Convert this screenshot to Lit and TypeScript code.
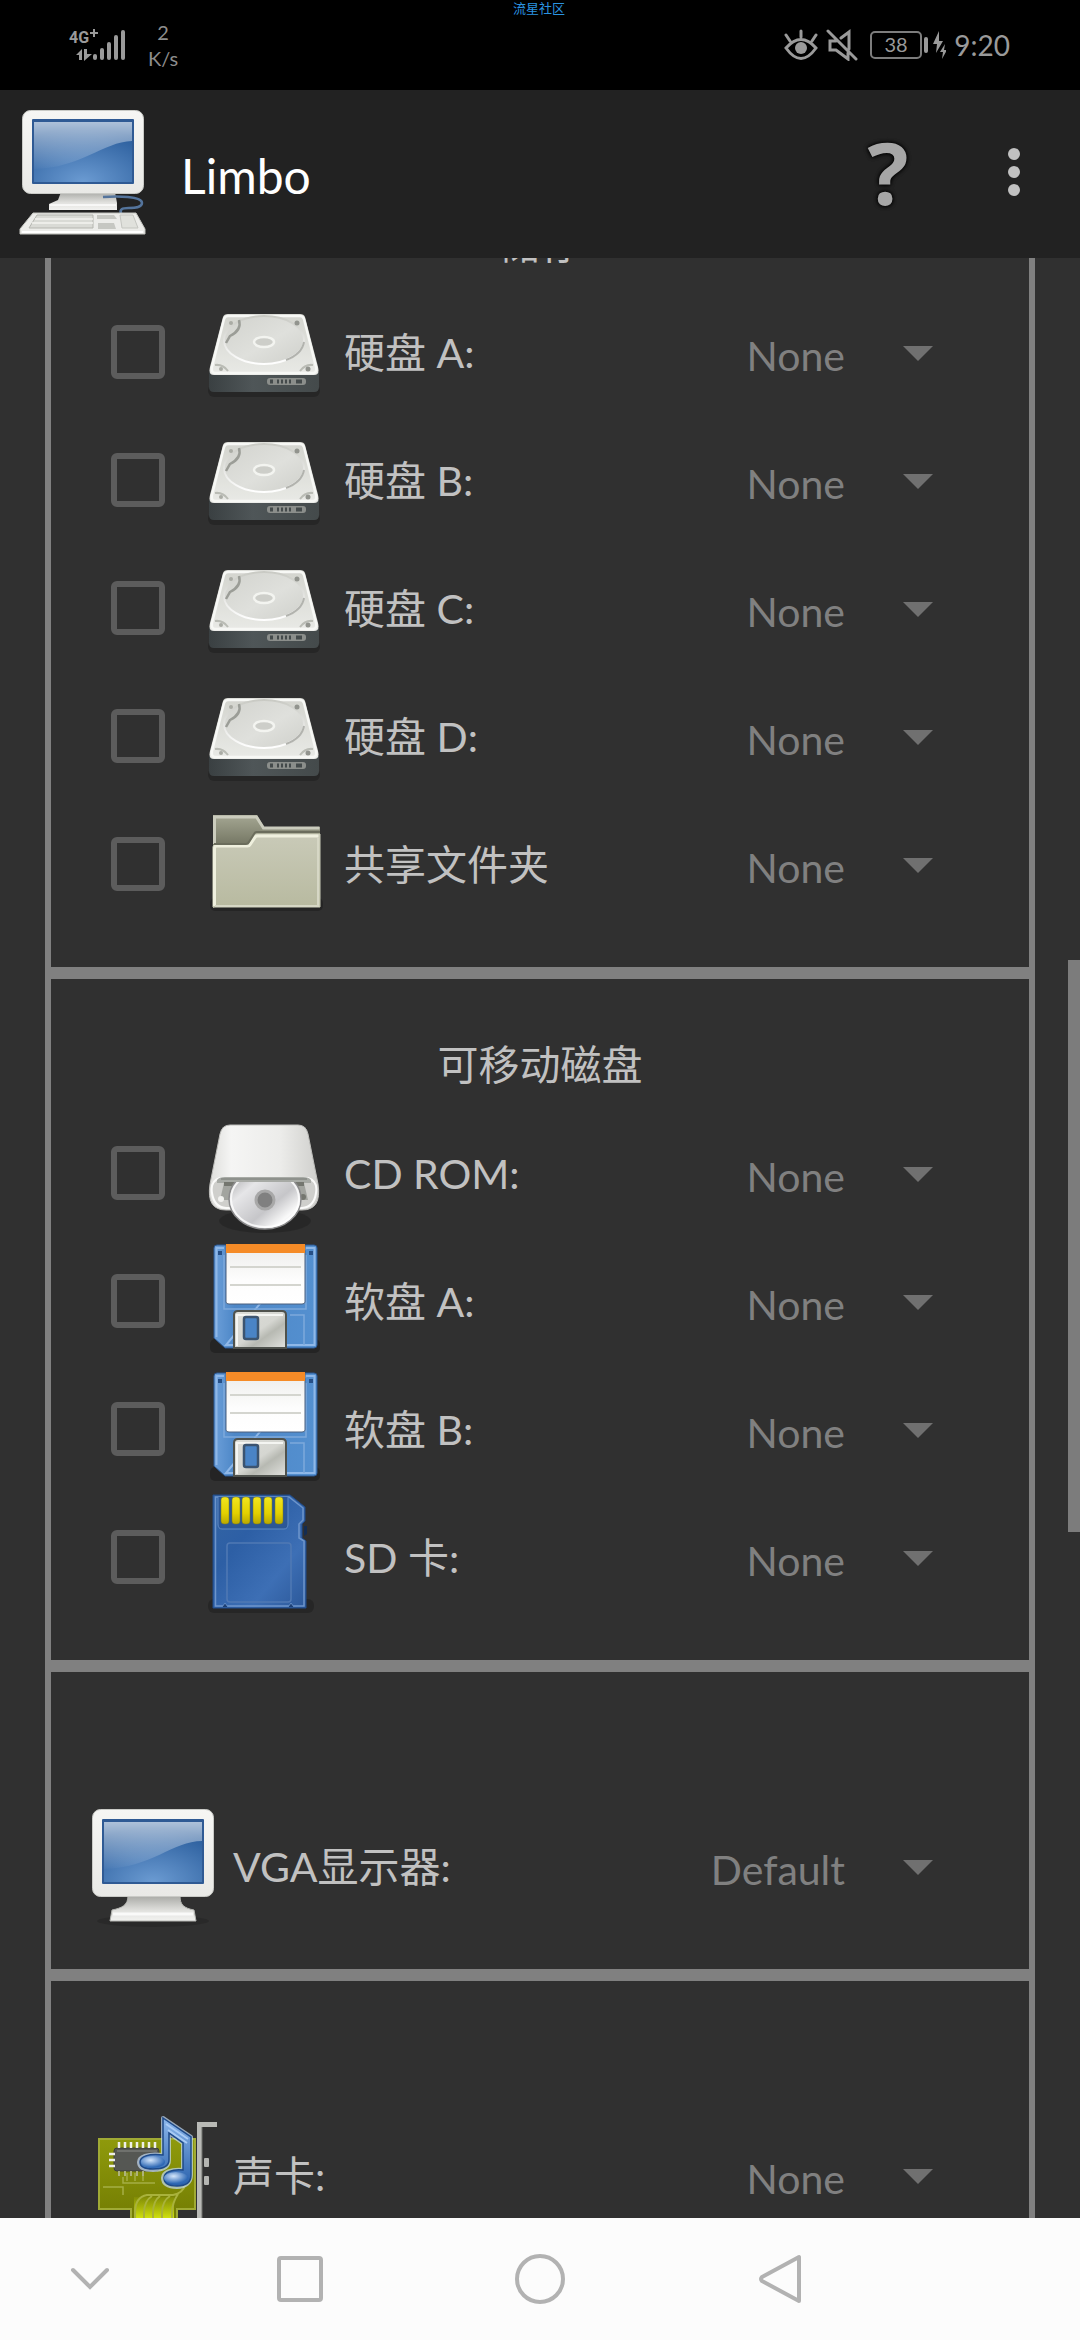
import { LitElement, html, svg, css, nothing } from "lit";
import { customElement, property } from "lit/decorators.js";

type IconName = "computer" | "disk" | "folder" | "cdrom" | "floppy" | "sdcard" | "monitor" | "sound";

interface Device {
  id: string;
  label: string;
  icon: IconName;
  value: string;
  checkable: boolean;
}

interface Section {
  title: string;
  devices: Device[];
}

const drive = (id: string, label: string, icon: IconName): Device => ({
  id,
  label,
  icon,
  value: "None",
  checkable: true,
});

const SECTIONS: Section[] = [
  {
    title: "储存",
    devices: [
      drive("hda", "硬盘 A:", "disk"),
      drive("hdb", "硬盘 B:", "disk"),
      drive("hdc", "硬盘 C:", "disk"),
      drive("hdd", "硬盘 D:", "disk"),
      drive("shared", "共享文件夹", "folder"),
    ],
  },
  {
    title: "可移动磁盘",
    devices: [
      drive("cdrom", "CD ROM:", "cdrom"),
      drive("fda", "软盘 A:", "floppy"),
      drive("fdb", "软盘 B:", "floppy"),
      drive("sd", "SD 卡:", "sdcard"),
    ],
  },
  {
    title: "",
    devices: [{ id: "vga", label: "VGA显示器:", icon: "monitor", value: "Default", checkable: false }],
  },
  {
    title: "",
    devices: [{ id: "sound", label: "声卡:", icon: "sound", value: "None", checkable: false }],
  },
];

const screenDefs = svg`
  <linearGradient id="case" x1="0" y1="0" x2="0" y2="1">
    <stop offset="0" stop-color="#f6f6f4" /><stop offset="1" stop-color="#e9e9e6" />
  </linearGradient>
  <radialGradient id="glass" cx="0.5" cy="1" r="0.9">
    <stop offset="0" stop-color="#6b9bd2" /><stop offset="1" stop-color="#2a5d9c" />
  </radialGradient>
  <linearGradient id="gloss" x1="0" y1="0" x2="0" y2="1">
    <stop offset="0" stop-color="#fff" stop-opacity="0.62" /><stop offset="1" stop-color="#fff" stop-opacity="0.02" />
  </linearGradient>
  <linearGradient id="stand" x1="0" y1="0" x2="0" y2="1">
    <stop offset="0" stop-color="#a9aaa6" /><stop offset="0.6" stop-color="#e2e2df" /><stop offset="1" stop-color="#f2f2f0" />
  </linearGradient>`;

const ICONS: Record<IconName, unknown> = {
  computer: svg`
    <defs>${screenDefs}</defs>
    <path d="M42 84h54l2 11v7H30v-6l9-4z" fill="url(#stand)" />
    <path d="M31 97h66" stroke="#fff" stroke-width="2" opacity="0.7" />
    <rect x="3.5" y="2.500" width="121" height="83" rx="8" fill="url(#case)" stroke="#c9cac6" />
    <rect x="13" y="11" width="102" height="65" rx="1" fill="#2f5a94" />
    <rect x="15" y="14" width="98" height="60" fill="url(#glass)" />
    <path d="M15 14h98v19C84 34 62 60 15 61z" fill="url(#gloss)" />
    <path d="M84 89c14-1 39-1 39 6s-17 4-20 6-1 5 1 8" fill="none" stroke="#54749c" stroke-width="2.500" />
    <path d="M14 105h103l9 16v5H1v-5z" fill="#ecece9" stroke="#c4c5c0" />
    <path d="M18 107h56v13H10z" fill="#d9dad5" stroke="#b4b5af" />
    <path d="M16 111h58M13 115h61" stroke="#f3f3f0" stroke-width="1.500" />
    <path d="M78 107h17l3 4H78zM79 115h16l2 6H79z" fill="#c6c7c2" />
    <path d="M101 107h13l5 13h-16z" fill="#e0e1dc" stroke="#c4c5c0" />
    <path d="M3 124h121" stroke="#fff" stroke-width="2" />`,
  monitor: svg`
    <defs>${screenDefs}</defs>
    <ellipse cx="64" cy="119" rx="56" ry="6" fill="#000" opacity="0.14" />
    <path d="M39 94h52c0 9 4 12 14 14l2 11H21l2-11c10-2 16-5 16-14z" fill="url(#stand)" stroke="#b5b6b2" />
    <path d="M24 112h80" stroke="#fff" stroke-width="3" opacity="0.8" />
    <rect x="3.500" y="7.500" width="121" height="87" rx="8" fill="url(#case)" stroke="#c9cac6" />
    <rect x="13" y="17" width="102" height="65" rx="1" fill="#2f5a94" />
    <rect x="15" y="20" width="98" height="60" fill="url(#glass)" />
    <path d="M15 20h98v19C84 39 62 66 15 67z" fill="url(#gloss)" />`,
  disk: svg`
    <defs>
      <linearGradient id="top" x1="0" y1="0" x2="0" y2="1">
        <stop offset="0" stop-color="#d3d4ce" /><stop offset="1" stop-color="#e9eae6" />
      </linearGradient>
      <linearGradient id="plate" x1="0" y1="0" x2="1" y2="1">
        <stop offset="0" stop-color="#d2d3ce" /><stop offset="0.55" stop-color="#dfe0dc" /><stop offset="1" stop-color="#cfd0cb" />
      </linearGradient>
      <linearGradient id="side" x1="0" y1="0" x2="1" y2="0">
        <stop offset="0" stop-color="#3a4042" /><stop offset="0.4" stop-color="#4f5658" /><stop offset="1" stop-color="#444a4b" />
      </linearGradient>
      <linearGradient id="rim" x1="0" y1="0" x2="0" y2="1">
        <stop offset="0" stop-color="#c9cac4" /><stop offset="1" stop-color="#fff" />
      </linearGradient>
    </defs>
    <rect x="8" y="96" width="112" height="13" rx="6" fill="#000" opacity="0.2" />
    <path d="M9 84h110v15q0 5-5 5H14q-5 0-5-5z" fill="url(#side)" />
    <path d="M28 26h72q4 0 5 3l13 50q2 8-4 8H14q-6 0-4-8l13-50q1-3 5-3z" fill="url(#top)" />
    <path d="M28 28h72q3 0 4 3l12 48q1 6-3 6H15q-4 0-3-6l12-48q1-3 4-3z" fill="none" stroke="#f7f8f5" stroke-width="2.500" />
    <ellipse cx="64" cy="52" rx="40" ry="24" fill="url(#plate)" stroke="url(#rim)" stroke-width="2" />
    <path d="M39 32q3 10-9 16l-4 7" fill="none" stroke="#9b9d97" stroke-width="2.500" />
    <path d="M104 54q-2 12-18 18" fill="none" stroke="#b2b3ae" stroke-width="2" />
    <ellipse cx="64" cy="54" rx="10" ry="5" fill="#cdcec9" stroke="#f3f4f0" stroke-width="2.500" />
    <path d="M15 77q8-1 13 6M113 77q-8-1-13 6" fill="none" stroke="#babcb5" stroke-width="2" />
    <circle cx="31" cy="35" r="2" fill="#aaaca5" /><circle cx="97" cy="35" r="2.500" fill="#92948e" />
    <circle cx="21" cy="81" r="2" fill="#aaaca5" /><circle cx="108" cy="81" r="2.500" fill="#92948e" />
    <rect x="67" y="90" width="39" height="7" rx="3" fill="#8b8e8b" />
    <path d="M70 93.500h3M77 93.500h2M81 93.500h2M85 93.500h2M89 93.500h2M96 93.500h6" stroke="#444a4b" stroke-width="4" />`,
  folder: svg`
    <defs>
      <linearGradient id="back" x1="0" y1="0" x2="0" y2="1">
        <stop offset="0" stop-color="#a5a793" /><stop offset="0.35" stop-color="#70725f" /><stop offset="1" stop-color="#a5a793" />
      </linearGradient>
      <linearGradient id="front" x1="0" y1="0" x2="0" y2="1">
        <stop offset="0" stop-color="#c9cab8" /><stop offset="1" stop-color="#b8baa0" />
      </linearGradient>
    </defs>
    <rect x="10" y="98" width="113" height="13" rx="5" fill="#000" opacity="0.22" />
    <path d="M13 108V15h44l7 12h56v20z" fill="url(#back)" />
    <path d="M14.500 44V17h42l7 11h56" fill="none" stroke="#cbccbd" stroke-width="3" />
    <path d="M13 107V47q0-2 2-2h31q2 0 3-2l4-7q1-2 3-2h64v73z" fill="url(#front)" stroke="#ced0bb" />
    <path d="M14.500 106V49q0-3 2-3h31q2 0 3-2l4-6q1-2 3-2h61" fill="none" stroke="#eff0de" stroke-width="3" />
    <path d="M15 106h103V38" fill="none" stroke="#d6d7c5" stroke-width="2" />
    <path d="M14 44h32q2 0 3-2l5-8q1-2 3-2h63" fill="none" stroke="#6b6d5c" stroke-width="2" />`,
  cdrom: svg`
    <defs>
      <linearGradient id="shell" x1="0" y1="0" x2="1" y2="0">
        <stop offset="0" stop-color="#dededb" /><stop offset="0.2" stop-color="#f5f5f4" />
        <stop offset="0.65" stop-color="#ececea" /><stop offset="1" stop-color="#cfcfcc" />
      </linearGradient>
      <linearGradient id="disc" x1="0" y1="0" x2="1" y2="1">
        <stop offset="0" stop-color="#9a9a9c" /><stop offset="0.3" stop-color="#e6e6e8" />
        <stop offset="0.6" stop-color="#c6c6c9" /><stop offset="0.8" stop-color="#fafafa" /><stop offset="1" stop-color="#d2d2d4" />
      </linearGradient>
      <clipPath id="slot"><rect x="20" y="73" width="90" height="50" /></clipPath>
    </defs>
    <ellipse cx="65" cy="112" rx="46" ry="12" fill="#000" opacity="0.18" />
    <path d="M30 16h68q8 0 10 9l10 50q4 26-16 26H26Q6 101 10 75l10-50q2-9 10-9z" fill="url(#shell)" stroke="#bdbdba" />
    <path d="M20 69h88q10 3 8 15-2 14-14 15H26q-12-1-14-15-2-12 8-15z" fill="#cfcfcc" stroke="#fbfbfa" stroke-width="2" />
    <path d="M17 71q2-3 8-3h78q6 0 8 3v3H17z" fill="#a7aaa5" />
    <path d="M24 74h80l4 17H20z" fill="#a2a49f" />
    <path d="M24 75h80" stroke="#74766f" stroke-width="4" />
    <path d="M21 70h86" stroke="#8e918c" stroke-width="2" />
    <circle cx="21" cy="90" r="3" fill="#f3f3f1" /><circle cx="103" cy="88" r="3" fill="#74766f" />
    <g clip-path="url(#slot)">
      <ellipse cx="65" cy="90" rx="36" ry="30" fill="url(#disc)" stroke="#8a8a8b" stroke-width="1.500" />
      <ellipse cx="65" cy="90" rx="34" ry="28" fill="none" stroke="#fff" stroke-width="2" opacity="0.8" />
    </g>
    <circle cx="65" cy="91" r="9" fill="#808080" stroke="#a8a8a8" stroke-width="3" />`,
  floppy: svg`
    <defs>
      <linearGradient id="body" x1="0" y1="0" x2="1" y2="0">
        <stop offset="0" stop-color="#6c9fd9" /><stop offset="0.2" stop-color="#4d87c7" /><stop offset="1" stop-color="#5490d0" />
      </linearGradient>
      <linearGradient id="paper" x1="0" y1="0" x2="0" y2="1">
        <stop offset="0" stop-color="#ececea" /><stop offset="0.6" stop-color="#fdfdfd" /><stop offset="1" stop-color="#fff" />
      </linearGradient>
      <linearGradient id="metal" x1="0" y1="0" x2="1" y2="1">
        <stop offset="0" stop-color="#dcddd8" /><stop offset="0.5" stop-color="#d5d6d1" />
        <stop offset="0.65" stop-color="#b7b9b2" /><stop offset="1" stop-color="#e2e3df" />
      </linearGradient>
    </defs>
    <rect x="10" y="102" width="110" height="14" rx="5" fill="#000" opacity="0.25" />
    <path d="M17 8h97q3 0 3 3v97q0 3-3 3H25l-11-10V11q0-3 3-3z" fill="url(#body)" stroke="#2a5690" />
    <path d="M16.500 100V11H24M106 11h8.500v97H26z" fill="none" stroke="#8fb8e8" stroke-width="2" />
    <path d="M24 18v54h82V18M90 78h14v30" fill="none" stroke="#7da9dc" stroke-width="1.500" />
    <path d="M18 14h4v4h-4zM109 14h4v4h-4z" fill="#264f86" />
    <path d="M26 8h79v57q0 2-3 2H29q-3 0-3-2z" fill="url(#paper)" stroke="#4a5f7c" />
    <rect x="26" y="7" width="79" height="9" fill="#f58b27" />
    <path d="M30 30h71M30 48h71" stroke="#d4d5cf" stroke-width="2" />
    <path d="M34 111V78q0-4 4-4h44q4 0 4 4v33z" fill="url(#metal)" stroke="#4f524d" stroke-width="2" />
    <path d="M37 109V78h46" fill="none" stroke="#f4f5f2" stroke-width="2" />
    <rect x="44" y="80" width="14" height="22" rx="2" fill="#4a84c6" stroke="#3c5470" stroke-width="2.500" />`,
  sdcard: svg`
    <defs>
      <linearGradient id="card" x1="0" y1="0" x2="1" y2="1">
        <stop offset="0" stop-color="#3465a4" /><stop offset="0.35" stop-color="#2d5fa5" />
        <stop offset="0.7" stop-color="#3d6fb5" /><stop offset="1" stop-color="#2c5899" />
      </linearGradient>
      <linearGradient id="gold" x1="0" y1="0" x2="0" y2="1">
        <stop offset="0" stop-color="#f2e61e" /><stop offset="0.6" stop-color="#e3d000" /><stop offset="1" stop-color="#b9a800" />
      </linearGradient>
    </defs>
    <rect x="8" y="106" width="106" height="14" rx="6" fill="#000" opacity="0.2" />
    <path d="M13 2h77l15 12v14l-3 3v14l4 3v67H13z" fill="url(#card)" stroke="#204a87" />
    <path d="M15.500 113V4H89l14 11v12l-4 4v14l5 3v65H16z" fill="none" stroke="#6d95cb" stroke-width="1.500" />
    <path d="M18 4v27q0 5 4 5h62q4 0 4-5V4" fill="#2c5796" stroke="#5f8ac4" />
    ${[21, 32, 42, 53, 64, 75].map(
      (x) => svg`<rect x=${x} y="4" width="8" height="27" rx="3" fill="url(#gold)" stroke="#7a7b1c" stroke-width="0.500" />`,
    )}
    <rect x="27" y="50" width="64" height="59" rx="3" fill="none" stroke="#5079b4" stroke-width="1.500" />
    <path d="M22 114l3-4 3 4M88 114l3-4 3 4" fill="#1c3f74" stroke="#5f8ac4" />
    <path d="M104 33h3v8l-3 2z" fill="#142c50" />`,
  sound: svg`
    <defs>
      <linearGradient id="board" x1="0" y1="0" x2="0" y2="1">
        <stop offset="0" stop-color="#8f9a0c" /><stop offset="1" stop-color="#6c7500" />
      </linearGradient>
      <linearGradient id="tone" x1="0" y1="0" x2="0" y2="1">
        <stop offset="0" stop-color="#8db8ec" /><stop offset="1" stop-color="#2860ab" />
      </linearGradient>
      <radialGradient id="head" cx="0.4" cy="0.35" r="0.6">
        <stop offset="0" stop-color="#d4e6fb" /><stop offset="1" stop-color="#2f69b5" />
      </radialGradient>
      <linearGradient id="glow" gradientUnits="userSpaceOnUse" x1="0" y1="84" x2="0" y2="108">
        <stop offset="0" stop-color="#d9ea10" stop-opacity="0" /><stop offset="1" stop-color="#d9ea10" stop-opacity="0.95" />
      </linearGradient>
    </defs>
    <path d="M10 28h96v70H88v30H42V98H10z" fill="url(#board)" stroke="#a0aa35" stroke-width="2" />
    <path d="M14 76h20v8M34 66v6h32M38 62v8M46 62v8M54 62v8" fill="none" stroke="#a5ae45" stroke-width="1.500" />
    <rect x="45" y="86" width="40" height="42" fill="url(#glow)" />
    <path d="M46 128V102q0-16 12-18h26q10-2 12-10M55 128V102q0-12 8-17M64 128V102q0-12 7-17M73 128V102q0-12 8-17M83 128V102q0-10 6-19" fill="none" stroke="#a9b23c" stroke-width="2" />
    <rect x="25" y="37" width="45" height="23" rx="3" fill="#555753" stroke="#3c3e3a" />
    <path d="M28 40h40" stroke="#6f716d" stroke-width="2" />
    <path d="M30 31v6M36 31v6M42 31v6M48 31v6M54 31v6M60 31v6M66 31v6M20 43h6M20 49h6M20 55h6" stroke="#eeefe8" stroke-width="2.500" />
    <path d="M30 60v5M36 60v5M42 60v5M48 60v5M54 60v5" stroke="#aeb37a" stroke-width="2" />
    <path d="M92 40h10v12M94 62h8" fill="none" stroke="#a5ae45" stroke-width="1.500" />
    <path d="M74 7l28 19v38c0 8-6 12-14 12-10 0-14-4-14-9 0-6 8-9 20-8V32L80 22v27c0 7-6 10-16 10-9 0-14-3-14-8s8-9 24-7z" fill="url(#tone)" stroke="#c5dbf3" stroke-width="4" stroke-linejoin="round" opacity="0.7" />
    <path d="M74 7l28 19v38c0 8-6 11-14 11-10 0-13-4-13-8 0-6 8-9 19-8V32L80 22v27c0 7-6 9-16 9-9 0-13-3-13-7 0-5 8-9 23-7z" fill="url(#tone)" stroke="#1e4a89" stroke-width="1.500" />
    <path d="M77 13l22 15M79 19l19 13" stroke="#a9cbf5" stroke-width="2" />
    <ellipse cx="64" cy="51" rx="12" ry="6" fill="url(#head)" /><ellipse cx="87" cy="67" rx="12" ry="6" fill="url(#head)" />
    <path d="M110.500 128V13.500H128" fill="none" stroke="#b9bab6" stroke-width="5" />
    <path d="M113 128V16" stroke="#6e706c" />
    <rect x="115" y="47" width="5" height="9" rx="1" fill="#b5b6b2" /><rect x="115" y="65" width="5" height="9" rx="1" fill="#b5b6b2" />`,
};

/** Picture of a device, drawn on a 128-unit grid. */
@customElement("device-icon")
export class DeviceIcon extends LitElement {
  static styles = css`
    :host {
      display: block;
      flex: none;
      width: 128px;
      height: 128px;
    }
    .picture {
      display: block;
      width: 100%;
      height: 100%;
    }
  `;

  @property() name: IconName = "disk";

  render() {
    return html`<svg class="picture" viewBox="0 0 128 128" aria-hidden="true">${ICONS[this.name]}</svg>`;
  }
}

@customElement("app-root")
export class AppRoot extends LitElement {
  static styles = css`
    :host {
      display: flex;
      flex-direction: column;
      height: 100vh;
      overflow: hidden;
      background: #303030;
      color: #c1c1c1;
      font-family: Lato, "Noto Sans CJK SC", sans-serif;
    }
    button {
      display: grid;
      place-items: center;
      margin: 0;
      padding: 0;
      border: 0;
      background: none;
      color: inherit;
      font: inherit;
    }
    .glyph {
      display: block;
    }

    .status {
      display: grid;
      grid-template-columns: 1fr auto 1fr;
      flex: none;
      height: 90px;
      box-sizing: border-box;
      padding: 0 70px 0 68px;
      background: #000;
      color: #9a9a9a;
    }
    .carrier,
    .indicators {
      display: flex;
      align-items: center;
    }
    .carrier {
      gap: 20px;
    }
    .rate {
      display: flex;
      flex-direction: column;
      align-items: center;
      font-size: 20px;
      line-height: 26px;
      color: #8d8d8d;
    }
    .watermark {
      font-size: 13px;
      line-height: 16px;
      color: #2b94e0;
    }
    .indicators {
      justify-content: flex-end;
      gap: 8px;
    }
    .clock {
      font-size: 28px;
      line-height: 32px;
    }
    .network {
      font: 700 16px "Roboto", sans-serif;
    }
    .charge {
      font-size: 20px;
    }

    .appbar {
      display: flex;
      align-items: center;
      flex: none;
      height: 168px;
      box-sizing: border-box;
      padding: 0 24px 4px 19px;
      background: #222;
    }
    .name {
      flex: 1;
      margin: 0;
      padding: 8px 0 0 34px;
      font-size: 48px;
      line-height: 60px;
      font-weight: 400;
      color: #fff;
    }
    .help {
      width: 120px;
      height: 120px;
      font: 700 86px/100px "Open Sans", sans-serif;
      color: #a6a6a6;
      text-shadow: 0 0 4px #000, 0 0 4px #000;
    }
    .more {
      width: 84px;
      height: 120px;
      margin-left: 24px;
    }

    .content {
      position: relative;
      flex: 1;
      min-height: 0;
      overflow: hidden;
      padding: 0 45px;
    }
    .sections {
      margin-top: -106px;
    }
    .thumb {
      position: absolute;
      top: 702px;
      right: 0;
      width: 12px;
      height: 572px;
      background: #7c7c7c;
    }
    .section {
      box-sizing: border-box;
      border: 6px solid #808080;
      padding: 0 0 39px;
    }
    .title {
      height: 48px;
      margin: 0;
      padding: 62px 0 20px;
      font-size: 41px;
      line-height: 48px;
      font-weight: 400;
      text-align: center;
    }
    .device {
      display: flex;
      align-items: center;
      height: 128px;
      padding-left: 38px;
    }
    .device.checkable {
      padding-left: 60px;
    }
    .tick {
      appearance: none;
      flex: none;
      box-sizing: border-box;
      width: 54px;
      height: 54px;
      margin: 0 35px 0 0;
      border: 6px solid #5c5c5c;
      border-radius: 6px;
    }
    .tick:checked {
      background: #808080;
    }
    .label {
      flex: 1;
      padding: 2px 0 0 16px;
      font-size: 41px;
      line-height: 48px;
      white-space: nowrap;
    }
    .picker {
      display: grid;
      align-items: center;
      width: 400px;
      padding-top: 4px;
    }
    .choice {
      grid-area: 1 / 1;
      appearance: none;
      width: 100%;
      height: 96px;
      margin: 0;
      padding: 4px 184px 0 0;
      border: 0;
      background: none;
      color: #808080;
      font: 400 41px/48px Lato, "Noto Sans CJK SC", sans-serif;
      text-align: right;
      text-align-last: right;
    }
    .arrow {
      grid-area: 1 / 1;
      justify-self: end;
      margin-right: 96px;
      pointer-events: none;
    }

    .nav {
      display: grid;
      grid-template-columns: 3fr 4fr 4fr 4fr 3fr;
      flex: none;
      height: 122px;
      background: #fcfcfc;
    }
  `;

  private renderStatus() {
    return html`
      <div class="status">
        <div class="carrier">
          <svg class="glyph" width="60" height="40" viewBox="0 0 60 40" fill="#9a9a9a" role="img" aria-label="4G+">
            <text class="network" x="1" y="18">4G</text>
            <path d="M25 4h2v3h3v2h-3v3h-2V9h-3V7h3z" />
            <path d="M8 30l6-6v11h-3v-5zM16 24h3v5h5l-8 7z" />
            <rect x="25" y="29" width="4" height="6" rx="2" />
            <rect x="32" y="23" width="4" height="12" rx="2" />
            <rect x="39" y="17" width="4" height="18" rx="2" />
            <rect x="46" y="10" width="4" height="25" rx="2" />
            <rect x="53" y="5" width="4" height="30" rx="2" />
          </svg>
          <div class="rate"><span>2</span><span>K/s</span></div>
        </div>
        <div class="watermark">流星社区</div>
        <div class="indicators">
          <svg class="glyph" width="34" height="32" viewBox="0 0 34 32" fill="none" stroke="#9a9a9a" stroke-width="3" stroke-linecap="round" aria-hidden="true">
            <path d="M2 19Q17 2 32 19 17 40 2 19zM17 2v6M2 6l4 6M32 6l-4 6" />
            <circle cx="17" cy="19" r="6" fill="#9a9a9a" stroke="none" />
          </svg>
          <svg class="glyph" width="32" height="32" viewBox="0 0 32 32" fill="none" stroke="#9a9a9a" stroke-width="3" aria-hidden="true">
            <path d="M15 9l8-6v17M10 12H4v9h6l12 9v-6M2 2l28 28" stroke-linecap="round" />
          </svg>
          <svg class="glyph" width="80" height="32" viewBox="0 0 80 32" aria-hidden="true">
            <rect x="5" y="3" width="50" height="26" rx="4" fill="none" stroke="#7d7d7d" stroke-width="2" />
            <text class="charge" x="30" y="23" text-anchor="middle" fill="#9a9a9a">38</text>
            <rect x="58" y="8" width="4" height="16" rx="2" fill="#9a9a9a" />
            <path d="M73 2l-6 13h4l-1 9 7-12h-4zM79 15l-5 8h3l-1 7 5-9h-3z" fill="#9a9a9a" />
          </svg>
          <span class="clock">9:20</span>
        </div>
      </div>
    `;
  }

  private renderDevice(device: Device) {
    return html`
      <div class="device ${device.checkable ? "checkable" : ""}">
        ${device.checkable
          ? html`<input class="tick" type="checkbox" id="${device.id}-on" aria-labelledby="${device.id}-label" />`
          : nothing}
        <device-icon .name=${device.icon}></device-icon>
        <label class="label" id="${device.id}-label" for="${device.id}-value">${device.label}</label>
        <div class="picker">
          <select class="choice" id="${device.id}-value">
            <option>${device.value}</option>
          </select>
          <svg class="arrow" width="30" height="16" viewBox="0 0 30 16" aria-hidden="true">
            <path d="M0 0h30L15 15z" fill="#707070" />
          </svg>
        </div>
      </div>
    `;
  }

  render() {
    return html`
      ${this.renderStatus()}
      <header class="appbar">
        <device-icon .name=${"computer"}></device-icon>
        <h1 class="name">Limbo</h1>
        <button class="help" type="button">?</button>
        <button class="more" type="button" aria-label="More options">
          <svg class="glyph" width="12" height="48" viewBox="0 0 12 48" fill="#c1c1c1" aria-hidden="true">
            <circle cx="6" cy="6" r="6" /><circle cx="6" cy="24" r="6" /><circle cx="6" cy="42" r="6" />
          </svg>
        </button>
      </header>
      <main class="content">
        <div class="sections">
          ${SECTIONS.map(
            (section) => html`
              <section class="section">
                <h2 class="title">${section.title}</h2>
                ${section.devices.map((device) => this.renderDevice(device))}
              </section>
            `,
          )}
        </div>
        <div class="thumb"></div>
      </main>
      <nav class="nav">
        <button type="button" aria-label="Hide">
          <svg class="glyph" width="40" height="24" viewBox="0 0 40 24" fill="none" stroke="#b2b2b2" stroke-width="4" stroke-linecap="round">
            <path d="M3 3l17 17L37 3" />
          </svg>
        </button>
        <button type="button" aria-label="Recent apps">
          <svg class="glyph" width="46" height="46" viewBox="0 0 46 46" fill="none" stroke="#b2b2b2" stroke-width="4">
            <rect x="2" y="2" width="42" height="42" rx="2" />
          </svg>
        </button>
        <button type="button" aria-label="Home">
          <svg class="glyph" width="50" height="50" viewBox="0 0 50 50" fill="none" stroke="#b2b2b2" stroke-width="4">
            <circle cx="25" cy="25" r="23" />
          </svg>
        </button>
        <button type="button" aria-label="Back">
          <svg class="glyph" width="44" height="50" viewBox="0 0 44 50" fill="none" stroke="#b2b2b2" stroke-width="4" stroke-linejoin="round">
            <path d="M41 3v44L4 27q-2-2 0-4z" />
          </svg>
        </button>
      </nav>
    `;
  }
}
